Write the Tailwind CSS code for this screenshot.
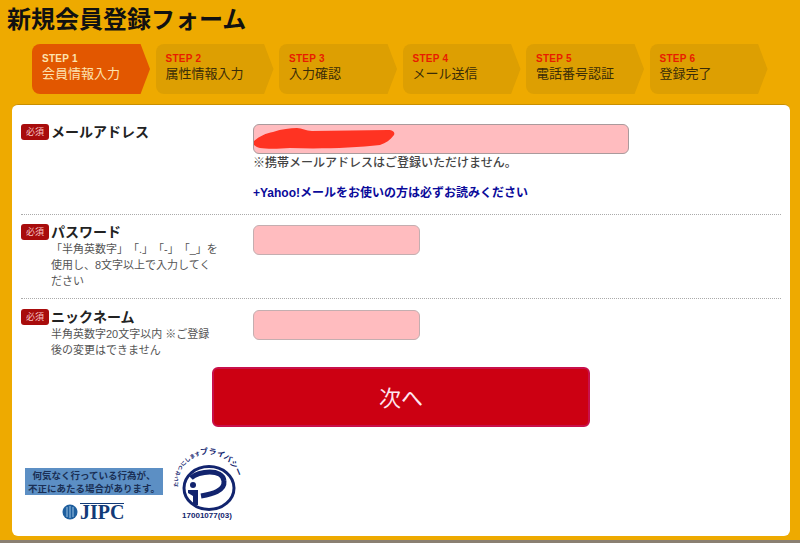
<!DOCTYPE html>
<html lang="ja">
<head>
  <meta charset="UTF-8">
  <title>新規会員登録フォーム</title>
  <script src="https://cdn.jsdelivr.net/npm/@tailwindcss/browser@4"></script>
</head>
<body class="bg-[#eeaa00] h-[543px] w-[800px] overflow-hidden relative font-['Liberation_Sans','Noto_Sans_CJK_JP',sans-serif] text-[#222]">

  <h1 class="pl-[7px] pt-[5px] h-[44px] text-[24px] leading-[30px] font-bold text-[#111]">新規会員登録フォーム</h1>

  <!-- steps -->
  <ol class="flex gap-[5.5px] pl-[32px] h-[50px]">
    <li class="w-[118px] h-[50px] pl-[10px] pt-[9px] rounded-l-lg bg-[#e25700] [clip-path:polygon(0_0,92%_0,100%_50%,92%_100%,0_100%)] text-[#fde3b0]">
      <div class="text-[10px] leading-[12px] font-bold tracking-wide">STEP 1</div>
      <div class="text-[13px] leading-[18px]">会員情報入力</div>
    </li>
    <li class="w-[118px] h-[50px] pl-[10px] pt-[9px] rounded-l-lg bg-[#dd9f02] [clip-path:polygon(0_0,92%_0,100%_50%,92%_100%,0_100%)]">
      <div class="text-[10px] leading-[12px] font-bold tracking-wide text-[#e81c00]">STEP 2</div>
      <div class="text-[13px] leading-[18px] text-[#3a2c08]">属性情報入力</div>
    </li>
    <li class="w-[118px] h-[50px] pl-[10px] pt-[9px] rounded-l-lg bg-[#dd9f02] [clip-path:polygon(0_0,92%_0,100%_50%,92%_100%,0_100%)]">
      <div class="text-[10px] leading-[12px] font-bold tracking-wide text-[#e81c00]">STEP 3</div>
      <div class="text-[13px] leading-[18px] text-[#3a2c08]">入力確認</div>
    </li>
    <li class="w-[118px] h-[50px] pl-[10px] pt-[9px] rounded-l-lg bg-[#dd9f02] [clip-path:polygon(0_0,92%_0,100%_50%,92%_100%,0_100%)]">
      <div class="text-[10px] leading-[12px] font-bold tracking-wide text-[#e81c00]">STEP 4</div>
      <div class="text-[13px] leading-[18px] text-[#3a2c08]">メール送信</div>
    </li>
    <li class="w-[118px] h-[50px] pl-[10px] pt-[9px] rounded-l-lg bg-[#dd9f02] [clip-path:polygon(0_0,92%_0,100%_50%,92%_100%,0_100%)]">
      <div class="text-[10px] leading-[12px] font-bold tracking-wide text-[#e81c00]">STEP 5</div>
      <div class="text-[13px] leading-[18px] text-[#3a2c08]">電話番号認証</div>
    </li>
    <li class="w-[118px] h-[50px] pl-[10px] pt-[9px] rounded-l-lg bg-[#dd9f02] [clip-path:polygon(0_0,92%_0,100%_50%,92%_100%,0_100%)]">
      <div class="text-[10px] leading-[12px] font-bold tracking-wide text-[#e81c00]">STEP 6</div>
      <div class="text-[13px] leading-[18px] text-[#3a2c08]">登録完了</div>
    </li>
  </ol>

  <!-- card -->
  <main class="mt-[10px] mx-[12px] w-[778px] h-[432px] bg-white rounded-md px-[9px] border-t border-[#c98f00]">

    <div class="flex h-[110px] pt-[19px] border-b border-dotted border-[#aaa]">
      <div class="w-[232px] flex items-start">
        <span class="w-[28px] h-[16px] rounded-[3px] bg-[#a80c0c] text-[#f6c4c4] text-[9px] leading-[16px] text-center font-['Noto_Sans_CJK_JP',serif]">必須</span>
        <span class="ml-[2px] text-[14px] leading-[17px] font-bold">メールアドレス</span>
      </div>
      <div>
        <div class="relative w-[376px] h-[30px] rounded-[6px] bg-[#ffbcbf] border border-[#aa9a9c]">
          <svg class="absolute left-0 top-0" width="150" height="28" viewBox="0 0 150 28"><path d="M-1 17 C4 12 12 8 19 7 C28 4 36 3 43 3 C48 3 52 6 58 6 L134 5 C140 5 141 8 140 10 C136 15 132 18 126 20 C100 23 66 24 36 23 C24 24 12 24 6 23 C2 22 -1 20 -1 17 Z" fill="#ff3322"/></svg>
        </div>
        <p class="mt-[1px] text-[12px] leading-[16px] font-medium text-[#444]">※携帯メールアドレスはご登録いただけません。</p>
        <a class="block mt-[14px] text-[12px] leading-[16px] font-bold text-[#0a0a9a]">+Yahoo!メールをお使いの方は必ずお読みください</a>
      </div>
    </div>

    <div class="flex h-[84px] pt-[9px] border-b border-dotted border-[#aaa]">
      <div class="w-[232px] flex items-start">
        <span class="w-[28px] h-[16px] rounded-[3px] bg-[#a80c0c] text-[#f6c4c4] text-[9px] leading-[16px] text-center font-['Noto_Sans_CJK_JP',serif]">必須</span>
        <div class="ml-[2px]">
          <div class="text-[14px] leading-[17px] font-bold">パスワード</div>
          <p class="text-[11px] leading-[16px] text-[#555] whitespace-nowrap [text-spacing-trim:space-all]">「半角英数字」「.」「-」「_」を<br>使用し、8文字以上で入力してく<br>ださい</p>
        </div>
      </div>
      <div class="mt-px w-[167px] h-[30px] rounded-[6px] bg-[#ffbcbf] border border-[#c4aeb0]"></div>
    </div>

    <div class="flex h-[68px] pt-[10px]">
      <div class="w-[232px] flex items-start">
        <span class="w-[28px] h-[16px] rounded-[3px] bg-[#a80c0c] text-[#f6c4c4] text-[9px] leading-[16px] text-center font-['Noto_Sans_CJK_JP',serif]">必須</span>
        <div class="ml-[2px]">
          <div class="text-[14px] leading-[17px] font-bold">ニックネーム</div>
          <p class="text-[11px] leading-[16px] text-[#555] whitespace-nowrap">半角英数字20文字以内 ※ご登録<br>後の変更はできません</p>
        </div>
      </div>
      <div class="mt-px w-[167px] h-[30px] rounded-[6px] bg-[#ffbcbf] border border-[#c4aeb0]"></div>
    </div>

    <button class="block ml-[191px] w-[378px] h-[60px] pt-[3px] rounded-[6px] bg-[#cc0012] border-2 border-[#c8104a] text-[22px] text-[#ffe6f0]">次へ</button>

    <!-- footer marks -->
    <div class="flex items-start mt-[18px] ml-[4px]">
      <div class="w-[138px] pt-[23px]">
        <div class="h-[27px] bg-[#5c8fc4] text-[#1a2f55] text-[9.5px] leading-[13px] font-bold text-center pt-px">何気なく行っている行為が、<br>不正にあたる場合があります。</div>
        <div class="flex items-center ml-[36px] mt-[8px] h-[17px]">
          <svg width="19" height="16" viewBox="0 0 19 16"><circle cx="9" cy="8" r="7.5" fill="#1f5f9e"/><path d="M6 3 V13 M9 2 V14 M12 3 V13" stroke="#9cc4e4" stroke-width="1"/></svg>
          <span class="text-[20px] leading-[17px] font-bold font-['Liberation_Serif',serif] text-[#123a78] border-t border-[#123a78] w-[44px] whitespace-nowrap">JIPC</span>
        </div>
      </div>
      <svg class="ml-[7px] overflow-visible" width="76" height="78" viewBox="0 0 76 78">
        <ellipse cx="39" cy="43" rx="25" ry="21.5" fill="none" stroke="#12246e" stroke-width="3"/>
        <path d="M21 33 C28 26 53 23 54 36 C55 46 42 49 31 51" fill="none" stroke="#12246e" stroke-width="5"/>
        <circle cx="23" cy="40" r="3" fill="#12246e"/>
        <path d="M18 45 H28 V60 H23 V51 L18 48 Z" fill="#12246e"/>
        <path id="privacyArc" d="M8 42 A30 30 0 0 1 67 32" fill="none"/>
        <text class="font-bold" font-size="5.3" fill="#12246e"><textPath href="#privacyArc">たいせつにします<tspan font-size="7.8">プライバシー</tspan></textPath></text>
        <text x="37" y="73" text-anchor="middle" class="font-bold" font-size="8" fill="#12246e">17001077(03)</text>
      </svg>
    </div>
  </main>

  <div class="absolute left-0 bottom-0 w-full h-[3px] bg-[#8a8072]"></div>
</body>
</html>
